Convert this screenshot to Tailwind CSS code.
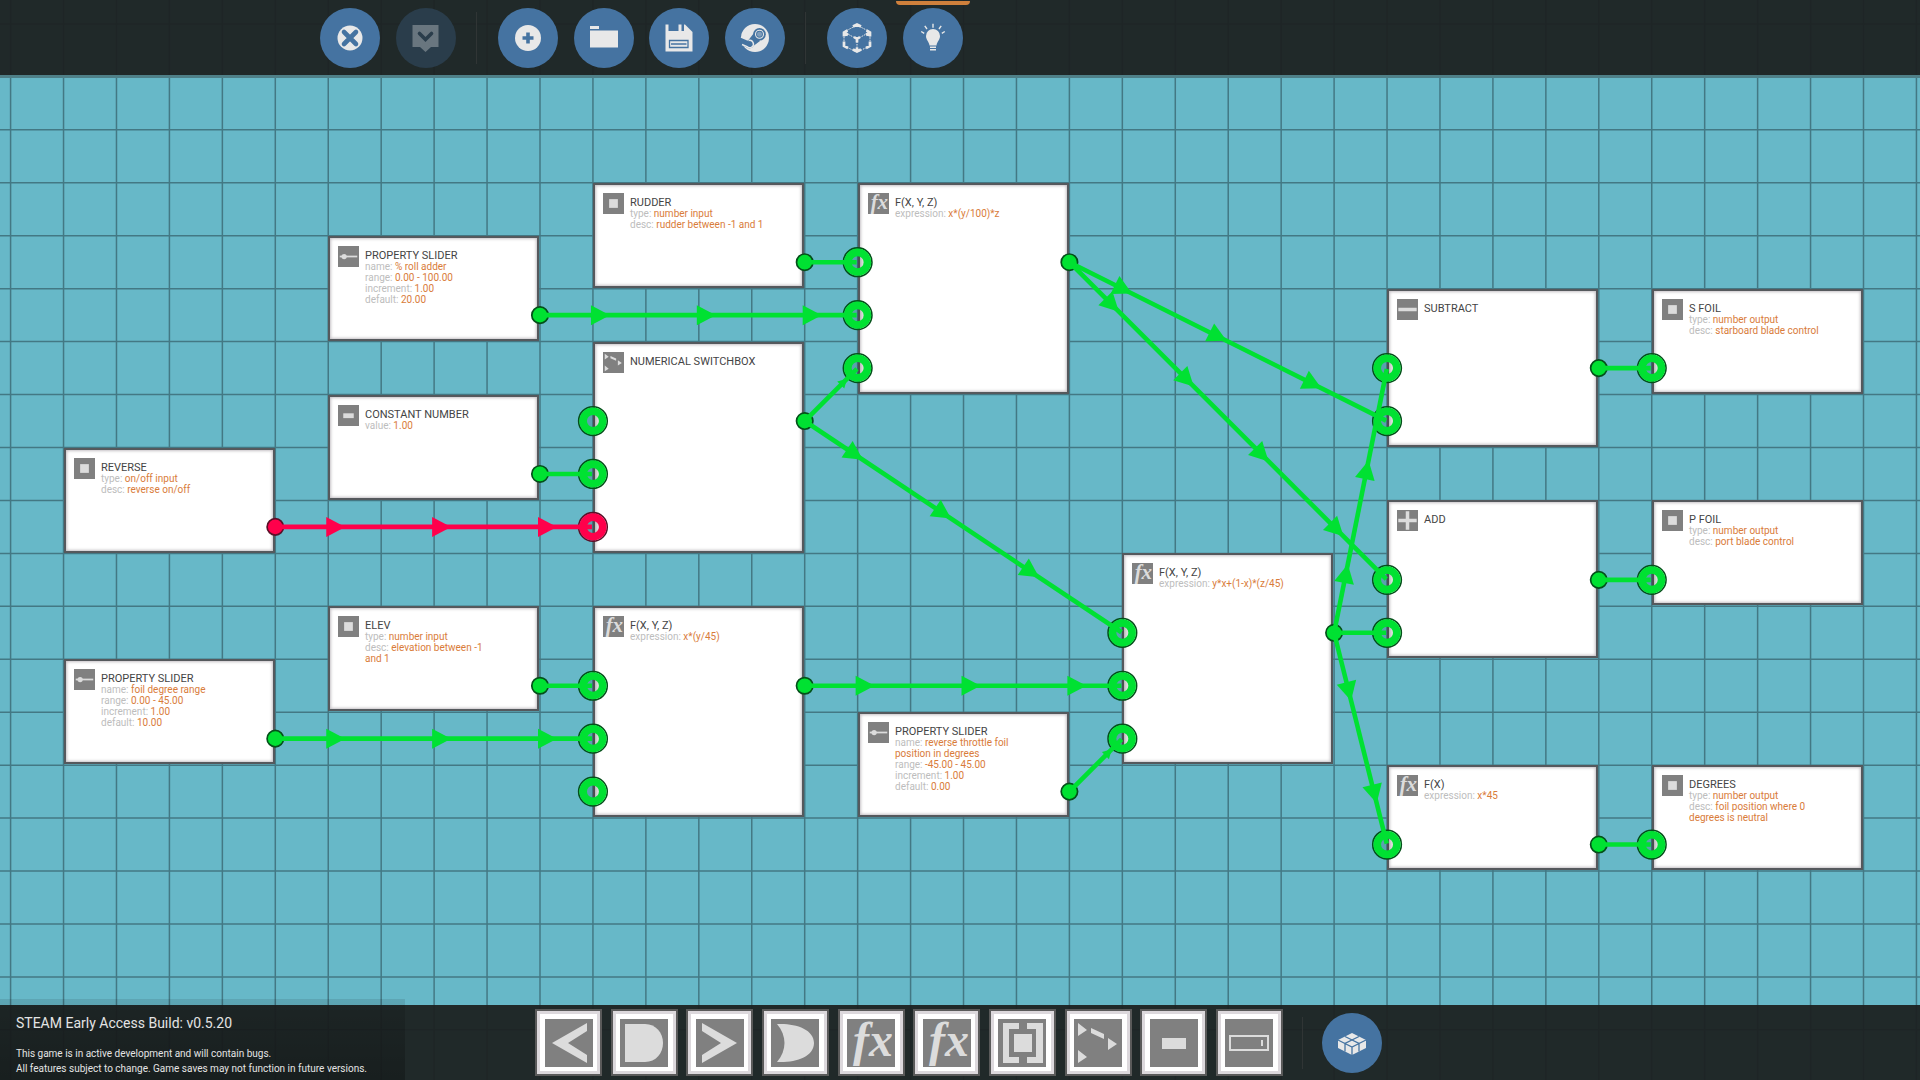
<!DOCTYPE html>
<html lang="en">
<head>
    <meta charset="UTF-8">
    <meta name="viewport" content="width=device-width, initial-scale=1.0">
    <title>Microcontroller Logic Editor</title>
    <script src="https://cdn.jsdelivr.net/npm/@tailwindcss/browser@4"></script>
</head>
<body class="relative h-screen overflow-hidden bg-[#67b8c8] font-['Roboto',sans-serif]">
    <!-- Icon library -->
    <svg class="hidden">
        <symbol id="lt" viewBox="0 0 48 48"><path d="M7 24 42 4v8L23 24l19 12v8z"/></symbol>
        <symbol id="gt" viewBox="0 0 48 48"><path d="M41 24 6 4v8l19 12L6 36v8z"/></symbol>
        <symbol id="and" viewBox="0 0 48 48"><path d="M5 5h20c11 0 18 9 18 19s-7 19-18 19H5z"/></symbol>
        <symbol id="or" viewBox="0 0 48 48"><path d="M6 5c18-1 37 5 37 19S24 44 6 43c10-12 10-26 0-38z"/></symbol>
        <symbol id="fx" viewBox="0 0 48 48"><text x="6" y="37" font-family="Liberation Serif, serif" font-style="italic" font-weight="700" font-size="48">fx</text></symbol>
        <symbol id="brackets" viewBox="0 0 48 48"><path d="M5 4h16v6H11v28h10v6H5zM45 4H29v6h9v28h-9v6h16zM16 15h18v18H16z"/></symbol>
        <symbol id="switch" viewBox="0 0 48 48"><path d="M4 4v13l9-6zM4 31v13l9-6zM34 19v12l9-6zM17 9l13 6v5l-13-6z"/></symbol>
        <symbol id="const" viewBox="0 0 48 48"><path d="M12 19h24v11H12z"/></symbol>
        <symbol id="prop" viewBox="0 0 48 48"><path d="M4 16h40v16H4zM6 18v12h36V18zM36 21h2v6h-2z" fill-rule="evenodd"/></symbol>
        <symbol id="io" viewBox="0 0 48 48"><path d="M14 14h20v20H14z"/></symbol>
        <symbol id="slider" viewBox="0 0 48 48"><path d="M4 22h40v4H4z"/><circle cx="14" cy="24" r="6"/></symbol>
        <symbol id="minus" viewBox="0 0 48 48"><path d="M3 20h42v8H3z"/></symbol>
        <symbol id="plus" viewBox="0 0 48 48"><path d="M3 20h17V3h8v17h17v8H28v17h-8V28H3z"/></symbol>
    </svg>

    <!-- Logic canvas -->
    <main class="absolute inset-0">
        <svg id="grid" class="absolute size-full"></svg>
        <div id="nodes"></div>
        <svg id="wires" class="pointer-events-none absolute size-full"></svg>
    </main>

    <div class="pointer-events-none relative flex h-full flex-col justify-between">
        <header class="pointer-events-auto flex h-[78px] items-center border-b-3 border-[#4f8088] bg-[#1c2121]/95 bg-clip-padding pl-80">
            <div class="flex gap-4">
                <button aria-label="Close" class="size-[60px] rounded-full bg-[#4573a1]">
                    <svg viewBox="0 0 60 60"><circle cx="30" cy="30" r="12.5" fill="#e8e8e8"/><path d="m24 24 12 12m0-12L24 36" stroke="#4573a1" stroke-width="4.6" stroke-linecap="round"/></svg>
                </button>
                <button aria-label="Apply" disabled class="size-[60px] rounded-full bg-[#2a3d4b]">
                    <svg viewBox="0 0 60 60"><path d="M16.500 17h26v22H35l-5.500 5L24 39h-7.500z" fill="#69767f"/><path d="m23.500 25.500 6 6 6-6" fill="none" stroke="#2a3d4b" stroke-width="3.600" stroke-linecap="round"/></svg>
                </button>
            </div>
            <div class="mr-[21px] ml-5 h-13 w-px bg-[#303535]"></div>
            <div class="flex w-[287px] justify-between">
                <button aria-label="New" class="size-[60px] rounded-full bg-[#4573a1]">
                    <svg viewBox="0 0 60 60"><circle cx="30" cy="30" r="13" fill="#e8e8e8"/><path d="M30 24.500v11M24.500 30h11" stroke="#4573a1" stroke-width="3.600"/></svg>
                </button>
                <button aria-label="Open" class="size-[60px] rounded-full bg-[#4573a1]">
                    <svg viewBox="0 0 60 60"><path d="M16 18h9v3h-9zM16 22.500h28v17H16z" fill="#e8e8e8"/></svg>
                </button>
                <button aria-label="Save" class="size-[60px] rounded-full bg-[#4573a1]">
                    <svg viewBox="0 0 60 60"><path d="M16.500 16.500H36l7.500 7.500v19.500h-27z" fill="#e8e8e8"/><path d="M19.500 16h10v7h-10zM32.500 16h2.500v7h-2.500z" fill="#4573a1"/><path d="M20.500 32.500h18.500v7H20.500zM22 36h15.500" fill="none" stroke="#4573a1" stroke-width="1.300"/></svg>
                </button>
                <button aria-label="Steam Workshop" class="size-[60px] rounded-full bg-[#4573a1]">
                    <svg viewBox="0 0 60 60">
                        <circle cx="30" cy="30" r="14" fill="#e8e8e8"/>
                        <path d="M14 28.500 23.500 32 29 25l6 8-6 4.500a5 5 0 0 1-8 1.500L14 36z" fill="#4573a1"/>
                        <circle cx="34.500" cy="26.300" r="6.300" fill="#4573a1"/>
                        <circle cx="34.500" cy="26.300" r="4" fill="none" stroke="#e8e8e8" stroke-width="1.100"/>
                        <circle cx="34.500" cy="26.300" r="2.500" fill="#7f9dbb"/>
                        <path d="M16 29l7 3M23.500 32.500a3.700 3.700 0 1 1-1.500 6l-5-2" fill="none" stroke="#e8e8e8" stroke-width="1.400"/>
                    </svg>
                </button>
            </div>
            <div class="mr-[21px] ml-5 h-13 w-px bg-[#303535]"></div>
            <div class="flex gap-4">
                <button aria-label="3D view" class="size-[60px] rounded-full bg-[#4573a1]">
                    <svg viewBox="0 0 60 60" fill="none" stroke="#e8e8e8">
                        <path d="m30 17 13 7v14l-13 6-13-6V24zM17 24l13 7 13-7M30 31v13" stroke-width="1" stroke-dasharray="1.500 1"/>
                        <path d="m26 18.500 4-2 4 2M17 28.500V24.500l3.500-2M17 24.500l4 2.500M43 28.500v-4l-3.500-2M43 24.500 39 27M27 29l3 2 3-2M30 31v3.500M17 33.500V38l4 2M43 33.500V38l-4 2M26 41.500l4 2 4-2M30 43.500V39.500" stroke-width="2.700"/>
                    </svg>
                </button>
                <div class="relative flex">
                    <button aria-label="Logic view" aria-pressed="true" class="size-[60px] rounded-full bg-[#4573a1]">
                        <svg viewBox="0 0 60 60"><path d="M30 21a7 7 0 0 1 7 7c0 4-3 5.500-3.500 9.500h-7C26 33.500 23 32 23 28a7 7 0 0 1 7-7z" fill="#e8e8e8"/><path d="M27 39.200h6M27 41.700h6M30 15.700v4M21.800 17.800l2.200 3.200M38.200 17.800 36 21M18.200 23.500l3 1.800M41.800 23.500l-3 1.800" stroke="#e8e8e8" stroke-width="1.400"/></svg>
                    </button>
                    <span class="absolute -top-[7px] -left-[7px] h-1 w-[74px] rounded-b-sm bg-[#cf803c]"></span>
                </div>
            </div>
        </header>

        <footer class="pointer-events-auto relative grid h-[75px] grid-cols-[1fr_auto_1fr] items-center bg-[#1c2121]/95">
            <span class="absolute bottom-0 left-0 h-[81px] w-[405px] bg-linear-to-b from-black/10 to-black/25"></span>
            <div class="relative pt-[3px] pl-4 whitespace-nowrap text-[#e4e4e4]">
                <p class="mb-[13px] text-[14px] leading-5">STEAM Early Access Build: v0.5.20</p>
                <p class="text-[10px] leading-[15px]">This game is in active development and will contain bugs.</p>
                <p class="text-[10px] leading-[15px]">All features subject to change. Game saves may not function in future versions.</p>
            </div>
            <div class="flex items-center pr-[3px]">
                <div id="palette" class="flex w-[748px] justify-between"></div>
                <div class="mx-[19px] h-13 w-px bg-[#303535]"></div>
                <button aria-label="Components" class="size-[60px] rounded-full bg-[#4573a1]">
                    <svg viewBox="0 0 60 60"><path d="m30 20 14 7v8l-14 7-14-7v-8z" fill="#e8e8e8"/><path d="m16 27 14 7 14-7M23 23.500l14 7v8M37 23.500l-14 7v8M30 34v8" fill="none" stroke="#4573a1" stroke-width="1.300"/></svg>
                </button>
            </div>
        </footer>
    </div>

    <script>
        const STEP = 52.94;
        const LEFT = 10.6;
        const TOP = 182.8;
        const GREEN = "#00e132";
        const RED = "#ff004b";

        const px = col => LEFT + col * STEP;
        const py = row => TOP + row * STEP;

        // col, row and height are in grid squares, every node is 4 wide
        const nodes = [
            { col: 1, row: 5, h: 2, icon: "io", title: "REVERSE", props: [["type", "on/off input"], ["desc", "reverse on/off"]], inputs: 0, out: true, color: RED },
            { col: 1, row: 9, h: 2, icon: "slider", title: "PROPERTY SLIDER", props: [["name", "foil degree range"], ["range", "0.00 - 45.00"], ["increment", "1.00"], ["default", "10.00"]], inputs: 0, out: true },
            { col: 6, row: 1, h: 2, icon: "slider", title: "PROPERTY SLIDER", props: [["name", "% roll adder"], ["range", "0.00 - 100.00"], ["increment", "1.00"], ["default", "20.00"]], inputs: 0, out: true },
            { col: 6, row: 4, h: 2, icon: "const", title: "CONSTANT NUMBER", props: [["value", "1.00"]], inputs: 0, out: true },
            { col: 6, row: 8, h: 2, icon: "io", title: "ELEV", props: [["type", "number input"], ["desc", "elevation between -1 and 1"]], inputs: 0, out: true },
            { col: 11, row: 0, h: 2, icon: "io", title: "RUDDER", props: [["type", "number input"], ["desc", "rudder between -1 and 1"]], inputs: 0, out: true },
            { col: 11, row: 3, h: 4, icon: "switch", title: "NUMERICAL SWITCHBOX", props: [], inputs: 3, out: true, redInput: 2 },
            { col: 11, row: 8, h: 4, icon: "fx", title: "F(X, Y, Z)", props: [["expression", "x*(y/45)"]], inputs: 3, out: true },
            { col: 16, row: 0, h: 4, icon: "fx", title: "F(X, Y, Z)", props: [["expression", "x*(y/100)*z"]], inputs: 3, out: true },
            { col: 16, row: 10, h: 2, icon: "slider", title: "PROPERTY SLIDER", props: [["name", "reverse throttle foil position in degrees"], ["range", "-45.00 - 45.00"], ["increment", "1.00"], ["default", "0.00"]], inputs: 0, out: true },
            { col: 21, row: 7, h: 4, icon: "fx", title: "F(X, Y, Z)", props: [["expression", "y*x+(1-x)*(z/45)"]], inputs: 3, out: true },
            { col: 26, row: 2, h: 3, icon: "minus", title: "SUBTRACT", props: [], inputs: 2, out: true },
            { col: 26, row: 6, h: 3, icon: "plus", title: "ADD", props: [], inputs: 2, out: true },
            { col: 26, row: 11, h: 2, icon: "fx", title: "F(X)", props: [["expression", "x*45"]], inputs: 1, out: true },
            { col: 31, row: 2, h: 2, icon: "io", title: "S FOIL", props: [["type", "number output"], ["desc", "starboard blade control"]], inputs: 1 },
            { col: 31, row: 6, h: 2, icon: "io", title: "P FOIL", props: [["type", "number output"], ["desc", "port blade control"]], inputs: 1 },
            { col: 31, row: 11, h: 2, icon: "io", title: "DEGREES", props: [["type", "number output"], ["desc", "foil position where 0 degrees is neutral"]], inputs: 1 }
        ];

        // from col, from row, to col, to row
        const wires = [
            [15, 1.5, 16, 1.5], [10, 2.5, 16, 2.5], [15, 4.5, 16, 3.5], [10, 5.5, 11, 5.5],
            [5, 6.5, 11, 6.5, RED], [10, 9.5, 11, 9.5], [5, 10.5, 11, 10.5], [15, 4.5, 21, 8.5],
            [15, 9.5, 21, 9.5], [20, 11.5, 21, 10.5], [20, 1.5, 26, 4.5], [20, 1.5, 26, 7.5],
            [25, 8.5, 26, 3.5], [25, 8.5, 26, 8.5], [25, 8.5, 26, 12.5],
            [30, 3.5, 31, 3.5], [30, 7.5, 31, 7.5], [30, 12.5, 31, 12.5]
        ];

        const palette = [
            ["lt", "Less than"], ["and", "AND gate"], ["gt", "Greater than"], ["or", "OR gate"], ["fx", "Function"],
            ["fx", "Boolean function"], ["brackets", "Composite"], ["switch", "Switchbox"], ["const", "Constant"], ["prop", "Property"]
        ];

        function drawGrid() {
            let lines = "";
            for (let x = px(0); x < window.innerWidth; x += STEP) {
                lines += `<line x1="${x}" x2="${x}" y1="0" y2="100%"/>`;
            }
            for (let y = py(-3); y < window.innerHeight; y += STEP) {
                lines += `<line x1="0" x2="100%" y1="${y}" y2="${y}"/>`;
            }
            document.getElementById("grid").innerHTML = `<g stroke="#437884" stroke-width="1.5">${lines}</g>`;
        }

        function drawNodes() {
            document.getElementById("nodes").innerHTML = nodes.map(n => `
                <article class="absolute flex gap-[6px] border-2 border-[#55595d] bg-white pt-2 pl-2 inset-shadow-[0_0_3px_1px_#c4c0c4]"
                    style="left:${Math.round(px(n.col))}px;top:${Math.round(py(n.row))}px;width:${Math.round(4 * STEP - 1)}px;height:${Math.round(n.h * STEP - 1)}px">
                    <svg class="size-[21px] shrink-0 bg-[#808080] fill-[#dcdcdc]"><use href="#${n.icon}"/></svg>
                    <div class="w-[136px] pt-1">
                        <h2 class="text-[11px] leading-[11px] whitespace-nowrap text-[#444]">${n.title}</h2>
                        ${n.props.map(([key, value]) => `<p class="text-[10px] leading-[11px] text-[#d97c3a]"><span class="text-[#bdbdbd]">${key}:</span> ${value}</p>`).join("")}
                    </div>
                </article>`).join("");
        }

        function drawWires() {
            let svg = "";
            nodes.forEach(n => {
                for (let i = 0; i < n.inputs; i++) {
                    const color = n.redInput === i ? RED : GREEN;
                    const dark = n.redInput === i ? "#5a1028" : "#04501a";
                    const at = `cx="${px(n.col)}" cy="${py(n.row + 1.5 + i)}"`;
                    svg += `<circle ${at} r="14.3" fill="none" stroke="${dark}" stroke-width="1.6"/>
                            <circle ${at} r="9.8" fill="#000" fill-opacity=".12" stroke="${color}" stroke-width="7.6"/>`;
                }
                if (n.out) {
                    svg += `<circle cx="${px(n.col + 4)}" cy="${py(n.row + 1.5)}" r="8.2" fill="${n.color || GREEN}" stroke="${n.color ? "#5a1028" : "#04501a"}" stroke-width="1.7"/>`;
                }
            });
            wires.forEach(([c1, r1, c2, r2, color = GREEN]) => {
                const dx = px(c2) - px(c1);
                const dy = py(r2) - py(r1);
                const length = Math.hypot(dx, dy);
                const angle = Math.atan2(dy, dx) * 180 / Math.PI;
                let arrows = "";
                for (let d = STEP; d + 12 < length; d += 2 * STEP) {
                    const s = length < 2 * STEP ? 5 : 10;
                    arrows += `<path d="M${d - 2} ${-s}v${2 * s}l${2 * s - 1} ${-s}z"/>`;
                }
                svg += `<g transform="translate(${px(c1)} ${py(r1)}) rotate(${angle})" fill="${color}">
                            <path d="M0-2.300h${length - 1}v4.600H0z"/>${arrows}</g>`;
            });
            document.getElementById("wires").innerHTML = svg;
        }

        function drawPalette() {
            document.getElementById("palette").innerHTML = palette.map(([icon, label]) => `
                <button aria-label="${label}" class="flex size-[67px] items-center justify-center border-2 border-[#5a5a5a] bg-white inset-shadow-[0_0_0_3px_#dcd8dc]">
                    <svg class="size-12 bg-[#808080] fill-[#dcdcdc]"><use href="#${icon}"/></svg>
                </button>`).join("");
        }

        drawGrid();
        drawNodes();
        drawWires();
        drawPalette();
        window.addEventListener("resize", drawGrid);
    </script>
</body>
</html>
